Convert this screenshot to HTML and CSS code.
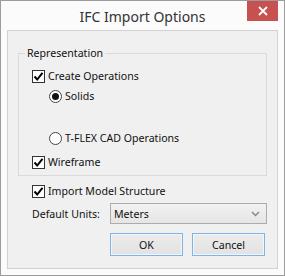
FILE: index.html
```html
<!DOCTYPE html>
<html lang="en">
<head>
  <meta charset="UTF-8">
  <title>IFC Import Options</title>
  <link rel="stylesheet" href="styles.css">
</head>
<body>
  <div class="window">
    <div class="title-bar">
      <div></div>
      <div class="title">IFC Import Options</div>
      <div class="close-btn">
        <svg width="10" height="10" viewBox="0 0 10 10"><path d="M1 1 L9 9 M9 1 L1 9" stroke="#fff" stroke-width="1.8"/></svg>
      </div>
    </div>

    <div class="client">
      <fieldset class="group">
        <legend>Representation</legend>
        <div class="row">
          <span class="check"><svg width="11" height="11" viewBox="0 0 11 11"><path d="M1.5 5.5 L4.2 8.5 L9.5 1.8" fill="none" stroke="#000" stroke-width="2"/></svg></span>
          Create Operations
        </div>
        <div class="row indent">
          <span class="radio on"></span>
          Solids
        </div>
        <div class="row indent spaced">
          <span class="radio"></span>
          T-FLEX CAD Operations
        </div>
        <div class="row tight">
          <span class="check"><svg width="11" height="11" viewBox="0 0 11 11"><path d="M1.5 5.5 L4.2 8.5 L9.5 1.8" fill="none" stroke="#000" stroke-width="2"/></svg></span>
          Wireframe
        </div>
      </fieldset>

      <div class="row outer">
        <span class="check"><svg width="11" height="11" viewBox="0 0 11 11"><path d="M1.5 5.5 L4.2 8.5 L9.5 1.8" fill="none" stroke="#000" stroke-width="2"/></svg></span>
        Import Model Structure
      </div>

      <div class="units">
        <label>Default Units:</label>
        <div class="select">
          <span>Meters</span>
          <svg width="9" height="6" viewBox="0 0 9 6"><path d="M1 1 L4.5 4.5 L8 1" fill="none" stroke="#888" stroke-width="1.5"/></svg>
        </div>
      </div>

      <div class="buttons">
        <button class="btn">OK</button>
        <button class="btn">Cancel</button>
      </div>
    </div>
  </div>
</body>
</html>
```

FILE: styles.css
```css
body {
  margin: 0;
  font-family: "Noto Sans", "Open Sans", sans-serif;
  font-size: 10.6px;
  color: #111;
}
.window {
  width: 285px;
  height: 276px;
  box-sizing: border-box;
  border: 1px solid #9c9c9c;
  background: #fbfbfb;
  padding: 0 6px 6px 6px;
  display: flex;
  flex-direction: column;
}
.title-bar {
  height: 29px;
  display: grid;
  grid-template-columns: 1fr auto 1fr;
  align-items: start;
}
.title {
  font-size: 14px;
  color: #333;
  line-height: 20px;
  padding-top: 6px;
}
.close-btn {
  justify-self: end;
  width: 31px;
  height: 20px;
  background: #c75050;
  display: flex;
  align-items: center;
  justify-content: center;
}
.client {
  flex: 1;
  background: #f0f0f0;
  border: 1px solid #d2d2d2;
}
.group {
  margin: 14px 10px 0 10px;
  padding: 5px 0 3px 13px;
  border: 1px solid #dadada;
}
.group legend {
  margin-left: -7px;
  padding: 0 2px;
  line-height: 16px;
}
.row {
  height: 20px;
  display: flex;
  align-items: center;
  gap: 3px;
  white-space: nowrap;
}
.indent {
  padding-left: 17px;
}
.spaced {
  margin-top: 22px;
}
.tight {
  margin-top: 4px;
}
.outer {
  margin: 5px 0 0 24px;
}
.check {
  width: 11px;
  height: 11px;
  border: 1px solid #333;
  background: #fff;
  display: flex;
}
.radio {
  width: 11px;
  height: 11px;
  border: 1px solid #444;
  border-radius: 50%;
  background: #fff;
  display: flex;
  align-items: center;
  justify-content: center;
}
.radio.on::after {
  content: "";
  width: 7px;
  height: 7px;
  border-radius: 50%;
  background: #111;
}
.units {
  margin: 2px 10px 0 24px;
  display: flex;
  align-items: center;
  justify-content: space-between;
  white-space: nowrap;
}
.select {
  width: 146px;
  height: 19px;
  border: 1px solid #acacac;
  background: linear-gradient(#f2f2f2, #e5e5e5);
  display: flex;
  align-items: center;
  justify-content: space-between;
  padding: 0 6px 0 3px;
}
.buttons {
  margin: 9px 12px 0 0;
  display: flex;
  justify-content: flex-end;
  gap: 9px;
}
.btn {
  width: 73px;
  height: 23px;
  font: inherit;
  color: #111;
  border: 1px solid #7eb4ea;
  background: linear-gradient(#ececec, #e2e2e2);
  box-shadow: inset 0 0 0 1px #f5f5f5;
  padding: 0;
}
```
